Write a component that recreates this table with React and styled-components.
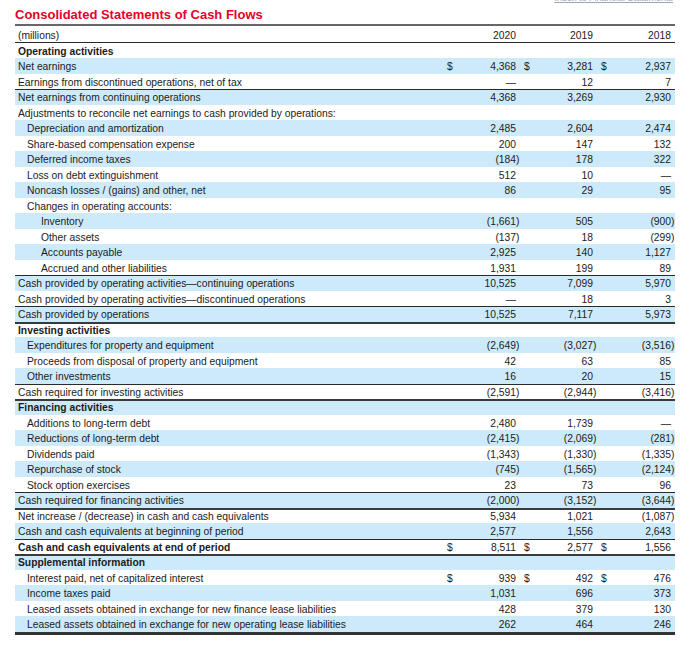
import React from "react";
import styled, { createGlobalStyle } from "styled-components";

const GlobalStyle = createGlobalStyle`
  html, body { margin: 0; padding: 0; background: #fff; }
  body {
    font-family: "Liberation Sans", Arial, Helvetica, sans-serif;
    color: #1b1b1b;
  }
`;

const Page = styled.div`
  width: 660px;
  padding: 0 21px 0 15px;
`;

const TopBar = styled.div`
  display: flex;
  justify-content: flex-end;
  height: 3px;
  padding-right: 2px;
`;

const IndexLink = styled.a`
  font-size: 9px;
  line-height: 10px;
  margin-top: -7px;
  color: #9da6b8;
  text-decoration: underline;
  white-space: nowrap;
`;

const Title = styled.h1`
  margin: 4px 0 1px;
  font-size: 13px;
  line-height: 16px;
  font-weight: bold;
  color: #e3002b;
  white-space: nowrap;
`;

const Table = styled.div`
  border-top: 2px solid #666;
  border-bottom: 3px solid #333;
`;

const RULES = {
  none: "none",
  thin: "inset 0 1px 0 #2a2a2a",
  thick: "inset 0 2px 0 #3a3a3a",
  under: "inset 0 -1px 0 #2a2a2a",
};

const Row = styled.div`
  display: grid;
  grid-template-columns: 1fr 77px 77px 78px;
  align-items: center;
  box-sizing: border-box;
  height: ${(p) => p.$h}px;
  padding-top: ${(p) => p.$pt || 0}px;
  background: ${(p) => (p.$shade ? "#cdeafa" : "#fff")};
  box-shadow: ${(p) => RULES[p.$rule || "none"]};
  font-size: 10.3px;
  line-height: 12px;
`;

const Label = styled.div`
  padding-left: ${(p) => [3, 12, 26][p.$level || 0]}px;
  font-weight: ${(p) => (p.$bold ? "bold" : "normal")};
  white-space: nowrap;
`;

const Cell = styled.div`
  display: flex;
  justify-content: space-between;
  padding: 0 4px;
  white-space: nowrap;
`;

const Dollar = styled.span`
  width: 6px;
`;

const Amount = styled.span`
  text-align: right;
`;

const Paren = styled.span`
  margin-right: -0.333em;
`;

function Num({ v }) {
  if (v === null || v === undefined) return null;
  if (v.startsWith("(")) {
    return (
      <Amount>
        {v.slice(0, -1)}
        <Paren>)</Paren>
      </Amount>
    );
  }
  return <Amount>{v}</Amount>;
}

const rows = [
  { l: "Net earnings", v: ["4,368", "3,281", "2,937"], d: true },
  { l: "Earnings from discontinued operations, net of tax", v: ["—", "12", "7"] },
  { l: "Net earnings from continuing operations", v: ["4,368", "3,269", "2,930"], rule: "thin" },
  { l: "Adjustments to reconcile net earnings to cash provided by operations:" },
  { l: "Depreciation and amortization", lv: 1, v: ["2,485", "2,604", "2,474"] },
  { l: "Share-based compensation expense", lv: 1, v: ["200", "147", "132"] },
  { l: "Deferred income taxes", lv: 1, v: ["(184)", "178", "322"] },
  { l: "Loss on debt extinguishment", lv: 1, v: ["512", "10", "—"] },
  { l: "Noncash losses / (gains) and other, net", lv: 1, v: ["86", "29", "95"] },
  { l: "Changes in operating accounts:", lv: 1 },
  { l: "Inventory", lv: 2, v: ["(1,661)", "505", "(900)"] },
  { l: "Other assets", lv: 2, v: ["(137)", "18", "(299)"] },
  { l: "Accounts payable", lv: 2, v: ["2,925", "140", "1,127"] },
  { l: "Accrued and other liabilities", lv: 2, v: ["1,931", "199", "89"] },
  { l: "Cash provided by operating activities—continuing operations", v: ["10,525", "7,099", "5,970"], rule: "thin" },
  { l: "Cash provided by operating activities—discontinued operations", v: ["—", "18", "3"] },
  { l: "Cash provided by operations", v: ["10,525", "7,117", "5,973"], rule: "thin" },
  { l: "Investing activities", b: true, rule: "thick" },
  { l: "Expenditures for property and equipment", lv: 1, v: ["(2,649)", "(3,027)", "(3,516)"] },
  { l: "Proceeds from disposal of property and equipment", lv: 1, v: ["42", "63", "85"] },
  { l: "Other investments", lv: 1, v: ["16", "20", "15"] },
  { l: "Cash required for investing activities", v: ["(2,591)", "(2,944)", "(3,416)"], rule: "thin" },
  { l: "Financing activities", b: true, rule: "thick" },
  { l: "Additions to long-term debt", lv: 1, v: ["2,480", "1,739", "—"] },
  { l: "Reductions of long-term debt", lv: 1, v: ["(2,415)", "(2,069)", "(281)"] },
  { l: "Dividends paid", lv: 1, v: ["(1,343)", "(1,330)", "(1,335)"] },
  { l: "Repurchase of stock", lv: 1, v: ["(745)", "(1,565)", "(2,124)"] },
  { l: "Stock option exercises", lv: 1, v: ["23", "73", "96"] },
  { l: "Cash required for financing activities", v: ["(2,000)", "(3,152)", "(3,644)"], rule: "thin" },
  { l: "Net increase / (decrease) in cash and cash equivalents", v: ["5,934", "1,021", "(1,087)"], rule: "thick" },
  { l: "Cash and cash equivalents at beginning of period", v: ["2,577", "1,556", "2,643"] },
  { l: "Cash and cash equivalents at end of period", b: true, v: ["8,511", "2,577", "1,556"], d: true, rule: "thin" },
  { l: "Supplemental information", b: true, rule: "thick" },
  { l: "Interest paid, net of capitalized interest", lv: 1, v: ["939", "492", "476"], d: true },
  { l: "Income taxes paid", lv: 1, v: ["1,031", "696", "373"] },
  { l: "Leased assets obtained in exchange for new finance lease liabilities", lv: 1, v: ["428", "379", "130"] },
  { l: "Leased assets obtained in exchange for new operating lease liabilities", lv: 1, v: ["262", "464", "246"] },
];

export default function App() {
  return (
    <>
      <GlobalStyle />
      <Page>
        <TopBar>
          <IndexLink href="#">Index to Financial Statements</IndexLink>
        </TopBar>
        <Title>Consolidated Statements of Cash Flows</Title>
        <Table>
          <Row $h={17} $pt={3} $rule="under">
            <Label>(millions)</Label>
            <Cell><span /><Amount>2020</Amount></Cell>
            <Cell><span /><Amount>2019</Amount></Cell>
            <Cell><span /><Amount>2018</Amount></Cell>
          </Row>
          <Row $h={15} $pt={3}>
            <Label $bold>Operating activities</Label>
          </Row>
          {rows.map((r, i) => (
            <Row key={i} $h={15.5} $pt={3} $shade={i % 2 === 0} $rule={r.rule}>
              <Label $level={r.lv} $bold={r.b}>{r.l}</Label>
              {r.v &&
                r.v.map((v, j) => (
                  <Cell key={j}>
                    <Dollar>{r.d ? "$" : ""}</Dollar>
                    <Num v={v} />
                  </Cell>
                ))}
            </Row>
          ))}
        </Table>
      </Page>
    </>
  );
}
